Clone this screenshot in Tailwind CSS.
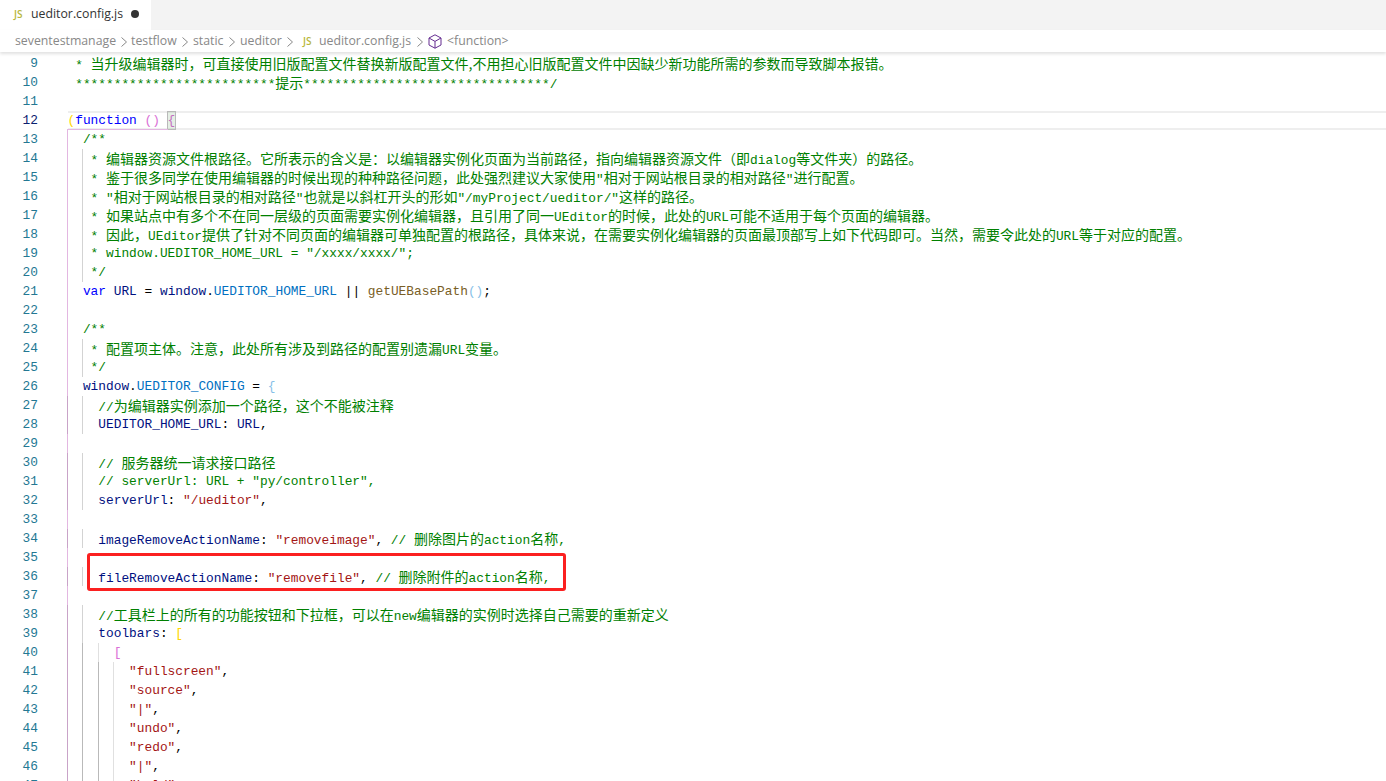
<!DOCTYPE html>
<html lang="zh">
<head>
    <meta charset="UTF-8">
    <title>ueditor.config.js</title>
    <script src="https://cdn.jsdelivr.net/npm/@tailwindcss/browser@4"></script>
</head>
<body class="relative h-[781px] w-[1386px] overflow-hidden bg-white font-['Open_Sans',sans-serif]">

    <!-- Tab bar -->
    <div class="flex h-[30px] bg-[#f3f3f3]">
        <div class="flex w-[151px] items-center bg-white pb-[2px] pl-[14px]">
            <span class="w-[17px] text-[10px] font-semibold text-[#b7b73b]">JS</span>
            <span class="w-[100px] text-[12.3px] text-[#333333]">ueditor.config.js</span>
            <span class="h-[8px] w-[8px] rounded-full bg-[#333333]"></span>
        </div>
    </div>

    <!-- Breadcrumbs -->
    <div class="relative z-10 flex h-[22px] items-center bg-white pl-[15px] pt-[1px] text-[12.3px] text-[#888888] shadow-[0_2px_3px_rgba(0,0,0,0.12)]">
        <span class="w-[106px]">seventestmanage</span>
        <svg class="mr-[4px] h-[10px] w-[6px]" viewBox="0 0 6 10" fill="none" stroke="#888888"><path d="M.5.5L5.5 5 .5 9.5"/></svg>
        <span class="w-[51px]">testflow</span>
        <svg class="mr-[5px] h-[10px] w-[6px]" viewBox="0 0 6 10" fill="none" stroke="#888888"><path d="M.5.5L5.5 5 .5 9.5"/></svg>
        <span class="w-[36px]">static</span>
        <svg class="mr-[5px] h-[10px] w-[6px]" viewBox="0 0 6 10" fill="none" stroke="#888888"><path d="M.5.5L5.5 5 .5 9.5"/></svg>
        <span class="w-[47px]">ueditor</span>
        <svg class="mr-[10px] h-[10px] w-[6px]" viewBox="0 0 6 10" fill="none" stroke="#888888"><path d="M.5.5L5.5 5 .5 9.5"/></svg>
        <span class="w-[16px] text-[10px] font-semibold text-[#b7b73b]">JS</span>
        <span class="w-[98px]">ueditor.config.js</span>
        <svg class="mr-[5px] h-[10px] w-[6px]" viewBox="0 0 6 10" fill="none" stroke="#888888"><path d="M.5.5L5.5 5 .5 9.5"/></svg>
        <svg class="mr-[5px] h-[15px] w-[14px]" viewBox="0 0 14 15" fill="none" stroke="#652d90"><path d="M7 .8l6 3.2v7l-6 3.2-6-3.2V4zM1 4l6 3.4L13 4M7 7.4v6.8"/></svg>
        <span>&lt;function&gt;</span>
    </div>

    <!-- Code -->
    <div class="flex flex-col pt-[2px] text-[12.83px] leading-[19px] text-black font-['Liberation_Mono',monospace] [&_span]:whitespace-pre [&_b]:text-[14px] [&_b]:font-normal [&_b]:font-['Noto_Sans_CJK_SC',sans-serif]">
        <div class="flex h-[19px] shrink-0"><span class="w-[38px] text-right text-[#237893]">9</span><span class="ml-[29.5px] text-[#008000]"> * <b>当升级编辑器时，可直接使用旧版配置文件替换新版配置文件,不用担心旧版配置文件中因缺少新功能所需的参数而导致脚本报错。</b></span></div>
        <div class="flex h-[19px] shrink-0"><span class="w-[38px] text-right text-[#237893]">10</span><span class="ml-[29.5px] text-[#008000]"> **************************<b>提示</b>********************************/</span></div>
        <div class="flex h-[19px] shrink-0"><span class="w-[38px] text-right text-[#237893]">11</span></div>
        <div class="flex h-[19px] shrink-0"><span class="w-[38px] text-right text-[#0b216f]">12</span><span class="ml-[29.5px] flex-1 border-y-2 border-[#eeeeee] leading-[15px]"><span class="text-[#ffd700]">(</span><span class="text-[#0000ff]">function</span> <span class="text-[#da70d6]">()</span> <span class="text-[#da70d6]">{</span></span></div>
        <div class="flex h-[19px] shrink-0"><span class="w-[38px] text-right text-[#237893]">13</span><span class="ml-[29.5px] text-[#008000]">  /**</span></div>
        <div class="flex h-[19px] shrink-0"><span class="w-[38px] text-right text-[#237893]">14</span><span class="ml-[29.5px] text-[#008000]">   * <b>编辑器资源文件根路径。它所表示的含义是：以编辑器实例化页面为当前路径，指向编辑器资源文件（即</b>dialog<b>等文件夹）的路径。</b></span></div>
        <div class="flex h-[19px] shrink-0"><span class="w-[38px] text-right text-[#237893]">15</span><span class="ml-[29.5px] text-[#008000]">   * <b>鉴于很多同学在使用编辑器的时候出现的种种路径问题，此处强烈建议大家使用</b>"<b>相对于网站根目录的相对路径</b>"<b>进行配置。</b></span></div>
        <div class="flex h-[19px] shrink-0"><span class="w-[38px] text-right text-[#237893]">16</span><span class="ml-[29.5px] text-[#008000]">   * "<b>相对于网站根目录的相对路径</b>"<b>也就是以斜杠开头的形如</b>"/myProject/ueditor/"<b>这样的路径。</b></span></div>
        <div class="flex h-[19px] shrink-0"><span class="w-[38px] text-right text-[#237893]">17</span><span class="ml-[29.5px] text-[#008000]">   * <b>如果站点中有多个不在同一层级的页面需要实例化编辑器，且引用了同一</b>UEditor<b>的时候，此处的</b>URL<b>可能不适用于每个页面的编辑器。</b></span></div>
        <div class="flex h-[19px] shrink-0"><span class="w-[38px] text-right text-[#237893]">18</span><span class="ml-[29.5px] text-[#008000]">   * <b>因此，</b>UEditor<b>提供了针对不同页面的编辑器可单独配置的根路径，具体来说，在需要实例化编辑器的页面最顶部写上如下代码即可。当然，需要令此处的</b>URL<b>等于对应的配置。</b></span></div>
        <div class="flex h-[19px] shrink-0"><span class="w-[38px] text-right text-[#237893]">19</span><span class="ml-[29.5px] text-[#008000]">   * window.UEDITOR_HOME_URL = "/xxxx/xxxx/";</span></div>
        <div class="flex h-[19px] shrink-0"><span class="w-[38px] text-right text-[#237893]">20</span><span class="ml-[29.5px] text-[#008000]">   */</span></div>
        <div class="flex h-[19px] shrink-0"><span class="w-[38px] text-right text-[#237893]">21</span><span class="ml-[29.5px]">  <span class="text-[#0000ff]">var</span> <span class="text-[#001080]">URL</span> = <span class="text-[#001080]">window</span>.<span class="text-[#0070c1]">UEDITOR_HOME_URL</span> || <span class="text-[#795e26]">getUEBasePath</span><span class="text-[#87bfe8]">()</span>;</span></div>
        <div class="flex h-[19px] shrink-0"><span class="w-[38px] text-right text-[#237893]">22</span></div>
        <div class="flex h-[19px] shrink-0"><span class="w-[38px] text-right text-[#237893]">23</span><span class="ml-[29.5px] text-[#008000]">  /**</span></div>
        <div class="flex h-[19px] shrink-0"><span class="w-[38px] text-right text-[#237893]">24</span><span class="ml-[29.5px] text-[#008000]">   * <b>配置项主体。注意，此处所有涉及到路径的配置别遗漏</b>URL<b>变量。</b></span></div>
        <div class="flex h-[19px] shrink-0"><span class="w-[38px] text-right text-[#237893]">25</span><span class="ml-[29.5px] text-[#008000]">   */</span></div>
        <div class="flex h-[19px] shrink-0"><span class="w-[38px] text-right text-[#237893]">26</span><span class="ml-[29.5px]">  <span class="text-[#001080]">window</span>.<span class="text-[#0070c1]">UEDITOR_CONFIG</span> = <span class="text-[#87bfe8]">{</span></span></div>
        <div class="flex h-[19px] shrink-0"><span class="w-[38px] text-right text-[#237893]">27</span><span class="ml-[29.5px] text-[#008000]">    //<b>为编辑器实例添加一个路径，这个不能被注释</b></span></div>
        <div class="flex h-[19px] shrink-0"><span class="w-[38px] text-right text-[#237893]">28</span><span class="ml-[29.5px]">    <span class="text-[#001080]">UEDITOR_HOME_URL</span>: <span class="text-[#001080]">URL</span>,</span></div>
        <div class="flex h-[19px] shrink-0"><span class="w-[38px] text-right text-[#237893]">29</span></div>
        <div class="flex h-[19px] shrink-0"><span class="w-[38px] text-right text-[#237893]">30</span><span class="ml-[29.5px] text-[#008000]">    // <b>服务器统一请求接口路径</b></span></div>
        <div class="flex h-[19px] shrink-0"><span class="w-[38px] text-right text-[#237893]">31</span><span class="ml-[29.5px] text-[#008000]">    // serverUrl: URL + "py/controller",</span></div>
        <div class="flex h-[19px] shrink-0"><span class="w-[38px] text-right text-[#237893]">32</span><span class="ml-[29.5px]">    <span class="text-[#001080]">serverUrl</span>: <span class="text-[#a31515]">"/ueditor"</span>,</span></div>
        <div class="flex h-[19px] shrink-0"><span class="w-[38px] text-right text-[#237893]">33</span></div>
        <div class="flex h-[19px] shrink-0"><span class="w-[38px] text-right text-[#237893]">34</span><span class="ml-[29.5px]">    <span class="text-[#001080]">imageRemoveActionName</span>: <span class="text-[#a31515]">"removeimage"</span>, <span class="text-[#008000]">// <b>删除图片的</b>action<b>名称</b>,</span></span></div>
        <div class="flex h-[19px] shrink-0"><span class="w-[38px] text-right text-[#237893]">35</span></div>
        <div class="flex h-[19px] shrink-0"><span class="w-[38px] text-right text-[#237893]">36</span><span class="ml-[29.5px]">    <span class="text-[#001080]">fileRemoveActionName</span>: <span class="text-[#a31515]">"removefile"</span>, <span class="text-[#008000]">// <b>删除附件的</b>action<b>名称</b>,</span></span></div>
        <div class="flex h-[19px] shrink-0"><span class="w-[38px] text-right text-[#237893]">37</span></div>
        <div class="flex h-[19px] shrink-0"><span class="w-[38px] text-right text-[#237893]">38</span><span class="ml-[29.5px] text-[#008000]">    //<b>工具栏上的所有的功能按钮和下拉框，可以在</b>new<b>编辑器的实例时选择自己需要的重新定义</b></span></div>
        <div class="flex h-[19px] shrink-0"><span class="w-[38px] text-right text-[#237893]">39</span><span class="ml-[29.5px]">    <span class="text-[#001080]">toolbars</span>: <span class="text-[#ffd700]">[</span></span></div>
        <div class="flex h-[19px] shrink-0"><span class="w-[38px] text-right text-[#237893]">40</span><span class="ml-[29.5px] text-[#da70d6]">      [</span></div>
        <div class="flex h-[19px] shrink-0"><span class="w-[38px] text-right text-[#237893]">41</span><span class="ml-[29.5px] text-[#a31515]">        "fullscreen"<span class="text-black">,</span></span></div>
        <div class="flex h-[19px] shrink-0"><span class="w-[38px] text-right text-[#237893]">42</span><span class="ml-[29.5px] text-[#a31515]">        "source"<span class="text-black">,</span></span></div>
        <div class="flex h-[19px] shrink-0"><span class="w-[38px] text-right text-[#237893]">43</span><span class="ml-[29.5px] text-[#a31515]">        "|"<span class="text-black">,</span></span></div>
        <div class="flex h-[19px] shrink-0"><span class="w-[38px] text-right text-[#237893]">44</span><span class="ml-[29.5px] text-[#a31515]">        "undo"<span class="text-black">,</span></span></div>
        <div class="flex h-[19px] shrink-0"><span class="w-[38px] text-right text-[#237893]">45</span><span class="ml-[29.5px] text-[#a31515]">        "redo"<span class="text-black">,</span></span></div>
        <div class="flex h-[19px] shrink-0"><span class="w-[38px] text-right text-[#237893]">46</span><span class="ml-[29.5px] text-[#a31515]">        "|"<span class="text-black">,</span></span></div>
        <div class="flex h-[19px] shrink-0"><span class="w-[38px] text-right text-[#237893]">47</span><span class="ml-[29.5px] text-[#a31515]">        "bold"<span class="text-black">,</span></span></div>
    </div>

    <!-- Bracket highlight on line 12 -->
    <div class="absolute left-[167px] top-[111px] h-[19px] w-[9px] border border-[#b9b9b9] bg-[#0064001a]"></div>

    <!-- Indent guides -->
    <div class="absolute left-[68px] top-[129px] h-px w-[100px] bg-[#e3b7e1]"></div>
    <div class="absolute left-[67px] top-[129px] h-[652px] w-px bg-[#e3b7e1]"></div>
    <div class="absolute left-[67px] top-[396px] h-[38px] w-px bg-[#c9a3c8]"></div>
    <div class="absolute left-[67px] top-[453px] h-[57px] w-px bg-[#c9a3c8]"></div>
    <div class="absolute left-[67px] top-[529px] h-[19px] w-px bg-[#c9a3c8]"></div>
    <div class="absolute left-[67px] top-[567px] h-[19px] w-px bg-[#c9a3c8]"></div>
    <div class="absolute left-[67px] top-[605px] h-[176px] w-px bg-[#c9a3c8]"></div>
    <div class="absolute left-[82px] top-[149px] h-[133px] w-px bg-[#d3d3d3]"></div>
    <div class="absolute left-[82px] top-[339px] h-[38px] w-px bg-[#d3d3d3]"></div>
    <div class="absolute left-[82px] top-[396px] h-[38px] w-px bg-[#d3d3d3]"></div>
    <div class="absolute left-[82px] top-[453px] h-[57px] w-px bg-[#d3d3d3]"></div>
    <div class="absolute left-[82px] top-[529px] h-[19px] w-px bg-[#d3d3d3]"></div>
    <div class="absolute left-[82px] top-[567px] h-[19px] w-px bg-[#d3d3d3]"></div>
    <div class="absolute left-[82px] top-[605px] h-[38px] w-px bg-[#d3d3d3]"></div>
    <div class="absolute left-[82px] top-[643px] h-[138px] w-px bg-[#b9b9b9]"></div>
    <div class="absolute left-[98px] top-[643px] h-[19px] w-px bg-[#e0e0e0]"></div>
    <div class="absolute left-[98px] top-[662px] h-[119px] w-px bg-[#b9b9b9]"></div>
    <div class="absolute left-[113px] top-[662px] h-[119px] w-px bg-[#e0e0e0]"></div>

    <!-- Red annotation box -->
    <div class="absolute left-[87px] top-[553px] h-[38px] w-[479px] rounded-[3px] border-[3px] border-[#fb2020]"></div>
</body>
</html>
